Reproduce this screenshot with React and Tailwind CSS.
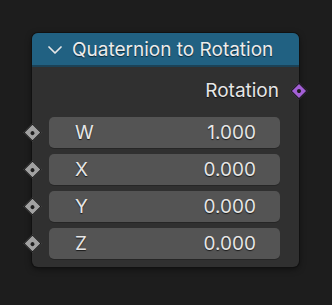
import React from 'react';

const inputs = [
  { name: 'W', value: '1.000' },
  { name: 'X', value: '0.000' },
  { name: 'Y', value: '0.000' },
  { name: 'Z', value: '0.000' },
];

// diamond socket: rotated square with a dark centre dot
function Socket({ box, className }) {
  return (
    <div className={`absolute rotate-45 border border-[#141414] flex items-center justify-center ${box} ${className}`}>
      <div className="w-[4px] h-[4px] rounded-full bg-[#1e1e1e]" />
    </div>
  );
}

export default function App() {
  return (
    <div
      className="w-[332px] h-[305px] bg-[#1d1d1d] pl-[32px] pt-[33px]"
      style={{ fontFamily: 'Inter, "Noto Sans", sans-serif' }}
    >
      <div className="relative w-[267px] h-[234px] rounded-[6px] bg-[#303030] shadow-[0_0_0_1px_#111,0_2px_6px_rgba(0,0,0,0.5)]">
        {/* Header */}
        <div className="h-[34px] rounded-t-[6px] bg-[#216182] border-b-2 border-[#1b4257] flex items-center pl-[16px] gap-[10px]">
          <svg width="14" height="8" viewBox="0 0 14 8" className="mt-[1px]">
            <path d="M1 1 L7 7 L13 1" fill="none" stroke="#e6e6e6" strokeWidth="1.7" strokeLinecap="round" strokeLinejoin="round" />
          </svg>
          <span className="text-[19px] leading-none text-[#ececec] [text-shadow:0_1px_1px_rgba(0,0,0,0.6)]">
            Quaternion to Rotation
          </span>
        </div>

        {/* Output */}
        <div className="relative h-[50px] flex items-center justify-end pr-[20px] pb-[3px]">
          <span className="text-[19px] leading-none text-[#e6e6e6] [text-shadow:0_1px_1px_rgba(0,0,0,0.7)]">Rotation</span>
          <Socket box="w-[12px] h-[12px] bg-[#a35fd6]" className="right-[-6px] top-[18px]" />
        </div>

        {/* Inputs */}
        <div className="flex flex-col gap-[6px] pl-[17px] pr-[19px]">
          {inputs.map((inp) => (
            <div key={inp.name} className="relative">
              <Socket box="w-[13px] h-[13px] bg-[#a1a1a1]" className="left-[-23.5px] top-[8.5px]" />
              <div className="h-[31px] rounded-[5px] bg-[#545454] shadow-[0_1px_0_#262626] flex items-center justify-between pl-[26px] pr-[24px] text-[19px] leading-none text-[#e6e6e6] [text-shadow:0_1px_1px_rgba(0,0,0,0.7)]">
                <span>{inp.name}</span>
                <span>{inp.value}</span>
              </div>
            </div>
          ))}
        </div>
      </div>
    </div>
  );
}
